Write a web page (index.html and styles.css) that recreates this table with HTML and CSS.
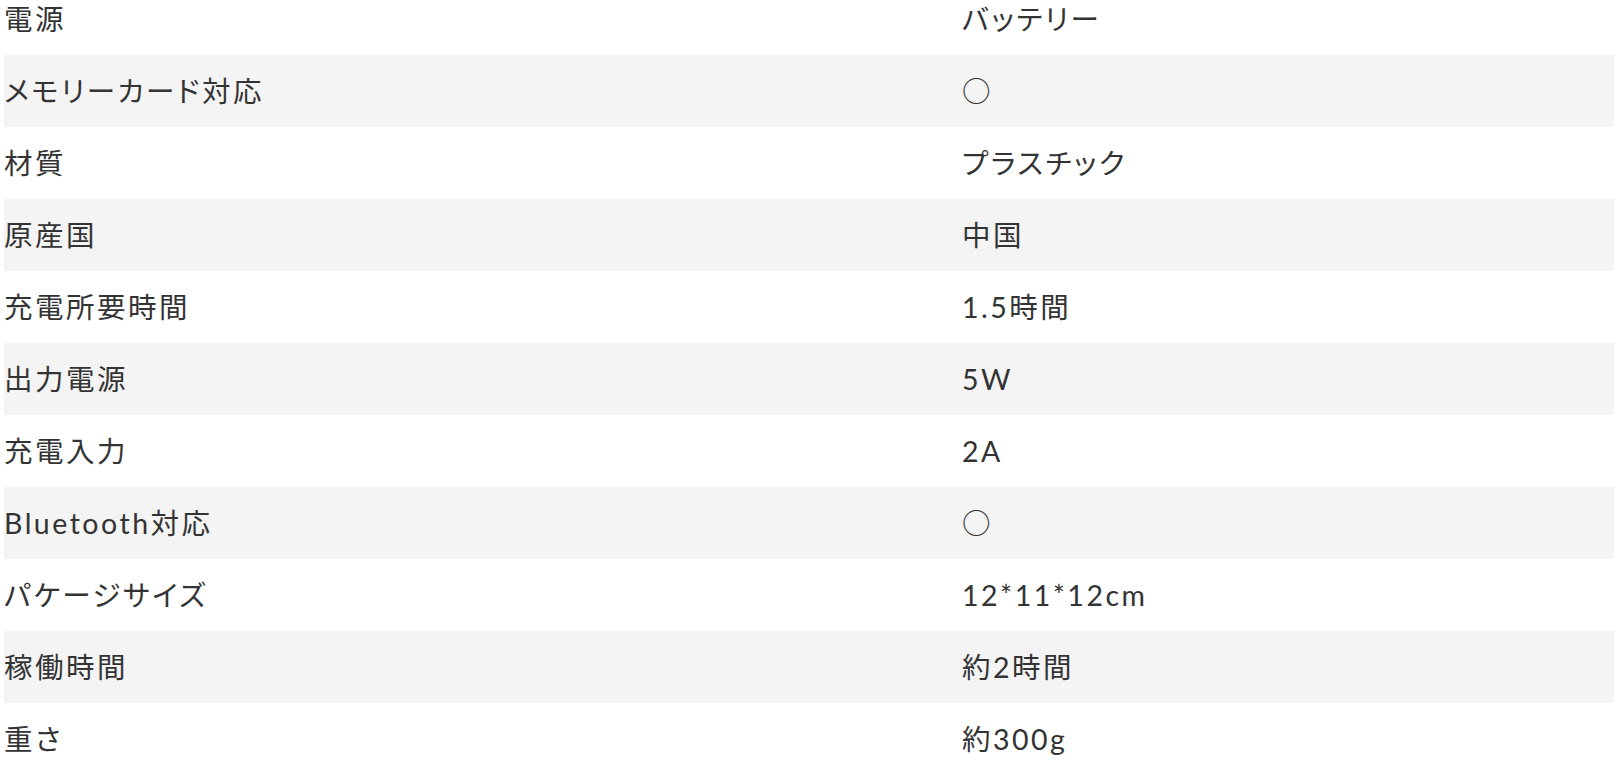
FILE: index.html
```html
<!DOCTYPE html>
<html lang="ja">
<head>
<meta charset="utf-8">
<link rel="stylesheet" href="styles.css">
</head>
<body>
<div class="spec">
  <div class="row"><div class="k">電源</div><div class="v">バッテリー</div></div>
  <div class="row alt"><div class="k">メモリーカード対応</div><div class="v"><span class="mark">○</span></div></div>
  <div class="row"><div class="k">材質</div><div class="v">プラスチック</div></div>
  <div class="row alt"><div class="k">原産国</div><div class="v">中国</div></div>
  <div class="row"><div class="k">充電所要時間</div><div class="v">1.5時間</div></div>
  <div class="row alt"><div class="k">出力電源</div><div class="v">5W</div></div>
  <div class="row"><div class="k">充電入力</div><div class="v">2A</div></div>
  <div class="row alt"><div class="k">Bluetooth対応</div><div class="v"><span class="mark">○</span></div></div>
  <div class="row"><div class="k">パケージサイズ</div><div class="v">12*11*12cm</div></div>
  <div class="row alt"><div class="k">稼働時間</div><div class="v">約2時間</div></div>
  <div class="row"><div class="k">重さ</div><div class="v">約300g</div></div>
</div>
</body>
</html>
```
FILE: styles.css
```css
html, body {
  margin: 0;
  padding: 0;
  background: #fff;
  overflow: hidden;
}
body {
  font-family: "Lato", "Noto Sans CJK JP", sans-serif;
  color: #333;
  font-size: 28.5px;
  letter-spacing: 2.5px;
  font-feature-settings: "palt";
}
.spec {
  margin: -17px 0 0 4px;
  display: flex;
  flex-direction: column;
}
.row {
  display: grid;
  grid-template-columns: 958px 1fr;
  height: 72px;
  align-items: center;
}
.row.alt {
  background: #f4f4f4;
}
.k, .v {
  line-height: 1.2;
  white-space: nowrap;
}
.mark {
  font-family: "Noto Sans CJK JP", sans-serif;
  font-feature-settings: normal;
}
```
